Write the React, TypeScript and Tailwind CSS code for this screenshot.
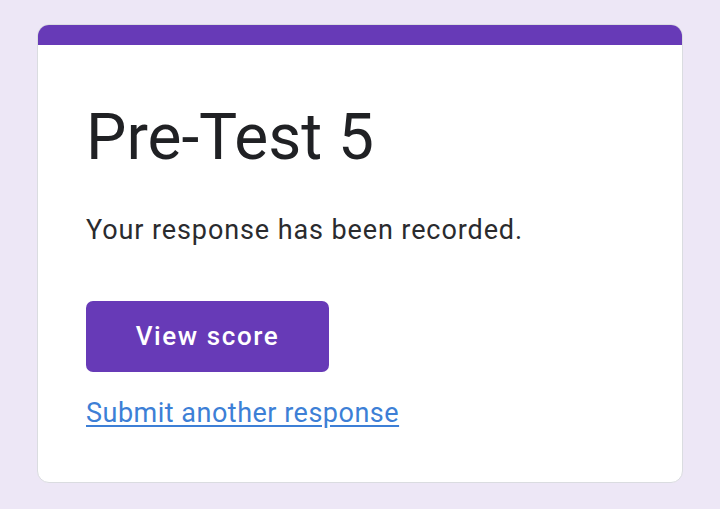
export default function App() {
  return (
    <div className="min-h-screen w-full bg-[#ede7f6] px-[37px] pt-[24px] pb-[26px] font-['Roboto',_'Liberation_Sans',_sans-serif]">
      <div className="bg-white rounded-[12px] border border-[#dadce0] overflow-hidden">
        {/* Top accent bar */}
        <div className="h-[20px] bg-[#673ab7]" />

        <div className="px-[48px] pt-[55px] pb-[53px]">
          <h1 className="text-[64px] leading-[76px] font-normal text-[#202124]">
            Pre-Test 5
          </h1>

          <p className="mt-[38px] text-[27px] leading-[32px] tracking-[0.9px] text-[#2a2b2e]">
            Your response has been recorded.
          </p>

          <button className="mt-[55px] flex h-[71px] w-[243px] items-center justify-center rounded-[7px] bg-[#673ab7] text-[26px] font-medium tracking-[1.6px] text-white">
            View score
          </button>

          <a
            href="#"
            className="mt-[25px] block w-fit text-[27px] leading-[32px] tracking-[0.5px] text-[#3d7fd6] underline underline-offset-[3px]"
          >
            Submit another response
          </a>
        </div>
      </div>
    </div>
  );
}
